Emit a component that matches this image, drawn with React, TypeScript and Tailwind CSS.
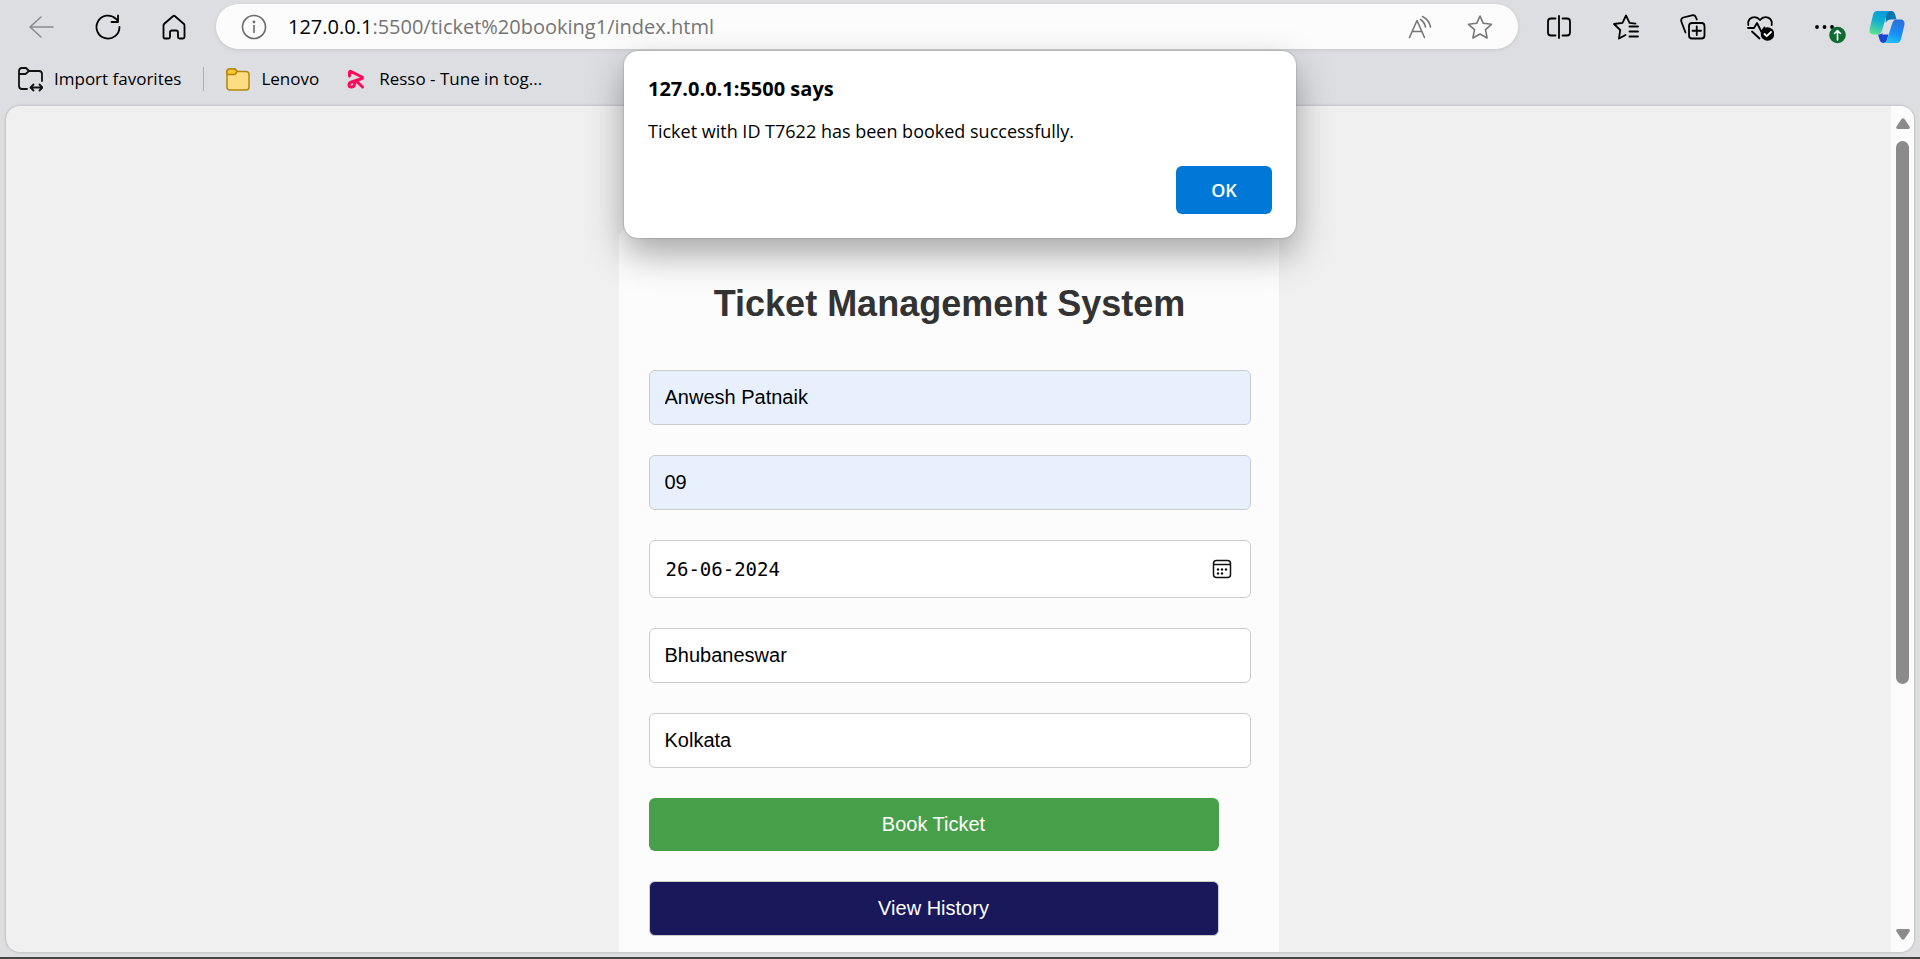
import type { ReactNode } from 'react';

type IconProps = { label: string; children: ReactNode; className?: string };

function IconButton({ label, children, className = '' }: IconProps) {
  return (
    <button type="button" aria-label={label} className={`relative flex size-7 shrink-0 items-center justify-center ${className}`}>
      {children}
    </button>
  );
}

const stroke = {
  width: 28,
  height: 28,
  viewBox: '0 0 28 28',
  fill: 'none',
  stroke: 'currentColor',
  strokeWidth: 1.6,
  strokeLinecap: 'round' as const,
  strokeLinejoin: 'round' as const,
};

function AddressBar() {
  return (
    <div className="flex h-[45px] min-w-0 flex-1 items-center rounded-full bg-[#fcfcfc] pr-6 pl-6 shadow-[0_1px_4px_rgba(0,0,0,0.1)]">
      <IconButton label="View site information" className="text-[#6b6b6b]">
        <svg {...stroke}>
          <circle cx="14" cy="14" r="11.5" />
          <path d="M14 12.5v7" />
          <circle cx="14" cy="9" r="0.6" fill="currentColor" />
        </svg>
      </IconButton>
      <p className="ml-5 min-w-0 flex-1 truncate text-[20px] leading-7 text-[#757575]">
        <span className="text-black">127.0.0.1</span>:5500/ticket%20booking1/index.html
      </p>
      <div className="flex items-center gap-8 text-[#767676]">
        <IconButton label="Read aloud">
          <svg {...stroke}>
            <path d="M3.5 24.5 11 7.5l7.5 17M6.3 18.500h9.400" />
            <path d="M14.500 6.500q4 2.500 5 7.500M16.500 3.500q6.500 3 8 10.500" />
          </svg>
        </IconButton>
        <IconButton label="Add this page to favorites">
          <svg {...stroke}>
            <path d="M14 3l3.300 7.300 8.200 1-6 5.400 1.600 8.300-7.100-4-7.100 4 1.600-8.300-6-5.400 8.200-1z" />
          </svg>
        </IconButton>
      </div>
    </div>
  );
}

function CopilotLogo() {
  return (
    <svg width="36" height="32" viewBox="0 0 36 32">
      <defs>
        <linearGradient id="cpLeft" x1="0.6" y1="0" x2="0.3" y2="1">
          <stop offset="0" stopColor="#069bdc" />
          <stop offset="0.45" stopColor="#12b0cf" />
          <stop offset="1" stopColor="#5fe08f" />
        </linearGradient>
        <linearGradient id="cpRight" x1="0.6" y1="0" x2="0.3" y2="1">
          <stop offset="0" stopColor="#2b6fdc" />
          <stop offset="0.6" stopColor="#1593f5" />
          <stop offset="1" stopColor="#25c3fd" />
        </linearGradient>
        <linearGradient id="cpTop" x1="0" y1="0" x2="1" y2="1">
          <stop offset="0" stopColor="#0a6d9e" />
          <stop offset="1" stopColor="#0f7fc0" />
        </linearGradient>
      </defs>
      <path d="M17 0h5c2.500 0 3.500 1.500 4.200 3.800L27.500 8.400h-5c-3 0-4.800 1-5.800 3.600z" fill="url(#cpTop)" />
      <path d="M9 23.600c3 0 4.500-.8 5.500-3L13 23.600h6.500L17.500 30q-.8 2-2.500 2-3.500 0-4.500-3.500z" fill="#1747d1" />
      <path d="M8 0h14c-2.600 0-3.800 2-4.600 4.800L13.500 18c-1 3.300-2.400 5.600-5.500 5.600H4.500C1 23.600 0 21 .7 17.600L4 4C4.700 1.500 6 0 8 0z" fill="url(#cpLeft)" />
      <path d="M28 32H14c2.600 0 3.800-2 4.600-4.800L23 13c1-3.200 2.200-4.600 5-4.600h3.500c3.500 0 4.500 2.600 3.800 6L32 28c-.7 2.500-2 4-4 4z" fill="url(#cpRight)" />
    </svg>
  );
}

function Toolbar() {
  return (
    <div className="flex h-[53px] items-center pr-[15px] pl-7">
      <div className="flex items-center gap-[38px] pr-7">
        <IconButton label="Back" className="text-[#8b8c8f]">
          <svg {...stroke}>
            <path d="M25 14H2M13 4 2 14l11 10" />
          </svg>
        </IconButton>
        <IconButton label="Refresh">
          <svg {...stroke} strokeWidth={1.8}>
            <path d="M25.500 14a11.500 11.500 0 1 1-3.500-8.200l2 2.200M24 2.500V9h-6.500" />
          </svg>
        </IconButton>
        <IconButton label="Home">
          <svg {...stroke} strokeWidth={1.8}>
            <path d="M3.500 12.500q0-1 .8-1.700L13 3.200q1-.8 2 0l8.700 7.600q.8.7.8 1.700v11.500q0 1.500-1.500 1.500h-3.500q-1.500 0-1.500-1.500v-4.500q0-2-2-2h-4q-2 0-2 2V24q0 1.500-1.500 1.500H5q-1.500 0-1.500-1.500z" />
          </svg>
        </IconButton>
      </div>
      <AddressBar />
      <div className="flex items-center gap-[39px] pr-7 pl-[27px]">
        <IconButton label="Split screen">
          <svg {...stroke} strokeWidth={1.8}>
            <path d="M14 3v22M10.500 5.500H6q-3 0-3 3v11q0 3 3 3h4.500M17.500 5.500H22q3 0 3 3v11q0 3-3 3h-4.500" />
          </svg>
        </IconButton>
        <IconButton label="Favorites">
          <svg {...stroke} strokeWidth={1.8}>
            <path d="M13.500 22 7 25.500l1.200-8.500L2 11l8.500-1.200L14 2.500l3.500 7.300 6 .8M17.500 13.500h8.500M17.500 18.500h8.500M17.500 23.500h8.500" />
          </svg>
        </IconButton>
        <IconButton label="Collections">
          <svg {...stroke} strokeWidth={1.8}>
            <rect x="10" y="10" width="15.5" height="15.5" rx="3" />
            <path d="M17.750 13.500v8.500M13.500 17.750h8.500M6.500 19.500 2.300 8.500q-.8-3 2-4L13 2.300q3-.6 4 2.200l.8 2" />
          </svg>
        </IconButton>
        <IconButton label="Browser essentials">
          <svg {...stroke} strokeWidth={1.8}>
            <path d="M2.300 12C1 4.500 9.500 1.500 14 7c4.500-5.500 13-2.500 11.700 5M2 15h6l3-5 4.500 9 3-4.500M6 18.500l7.500 7" />
            <circle cx="21.5" cy="21" r="6.8" fill="#000" stroke="none" />
            <path d="m18.500 21 2.200 2.200 4.300-4.200" stroke="#fff" />
          </svg>
        </IconButton>
        <IconButton label="Settings and more">
          <svg {...stroke} className="overflow-visible">
            <g fill="#000" stroke="none">
              <circle cx="4" cy="14" r="1.9" />
              <circle cx="11.5" cy="14" r="1.9" />
              <circle cx="19" cy="14" r="1.9" />
            </g>
            <circle cx="24.5" cy="22" r="8.3" fill="#0f6b2f" stroke="none" />
            <path d="M24.500 27V18M21.500 20.500l3-3 3 3" stroke="#fff" />
          </svg>
        </IconButton>
      </div>
      <button type="button" aria-label="Copilot" className="shrink-0">
        <CopilotLogo />
      </button>
    </div>
  );
}

function FavoritesBar() {
  return (
    <nav aria-label="Favorites bar" className="flex h-[53px] items-center pb-0.5 pl-[17px] text-[17px]">
      <a href="#import" className="flex items-center gap-[11px]">
        <svg width="26" height="26" viewBox="0 0 26 26" fill="none" stroke="#111" strokeWidth="1.8" strokeLinecap="round" strokeLinejoin="round">
          <path d="M10 23H5q-3 0-3-3V5q0-3 3-3h4l3 3h10q3 0 3 3v7M2 8h6.500l3.500-3M14 21.500h11M16.500 18.500l-3 3 3 3M22.500 18.500l3 3-3 3" />
        </svg>
        Import favorites
      </a>
      <span className="mx-[22px] h-6 w-px bg-[#aeb0b4]" />
      <a href="#lenovo" className="flex items-center gap-[11px]">
        <svg width="24" height="24" viewBox="0 0 24 24" fill="#ffdd81" stroke="#b2870e" strokeWidth="1.5" strokeLinejoin="round">
          <path d="M1 5q0-3 3-3h5l2.500 2.500H20q3 0 3 3V20q0 3-3 3H4q-3 0-3-3z" />
          <path d="M1 7.500V4.500q0-2.500 2.500-2.500h5.500l2 2.500-2 3z" fill="#fdc82f" />
        </svg>
        Lenovo
      </a>
      <a href="#resso" className="ml-7 flex items-center gap-[14px]">
        <svg width="18" height="20" viewBox="0 0 18 20" fill="none" stroke="#ff0a5b" strokeWidth="3" strokeLinecap="round" strokeLinejoin="round">
          <path d="M2.500 7V3.500Q2.500 2 4 2.500L15 8q1 .8 0 1.500L4.500 13q-2.500 1-2.500 3t2.500 2q2.500 0 3-2.500L8 12M10.500 13l5 5" />
        </svg>
        Resso - Tune in tog...
      </a>
    </nav>
  );
}

type FieldProps = { label: string; value: string; filled?: boolean };

function TextField({ label, value, filled = false }: FieldProps) {
  return (
    <input
      aria-label={label}
      defaultValue={value}
      className={`block h-[55px] w-full rounded-md border border-[#ccc] px-[15px] text-[20px] text-black outline-none ${filled ? 'bg-[#e8f0fe]' : 'bg-white'}`}
    />
  );
}

function DateField() {
  return (
    <div className="flex h-[58px] items-center rounded-md border border-[#ccc] bg-white pr-[18px] pl-4">
      <input
        aria-label="Date of journey"
        defaultValue="26-06-2024"
        className="h-8 min-w-0 flex-1 bg-transparent font-['DejaVu_Sans_Mono',monospace] text-[19px] text-black outline-none"
      />
      <button type="button" aria-label="Show date picker">
        <svg width="20" height="20" viewBox="0 0 20 20" fill="none" stroke="#111" strokeWidth="1.5">
          <rect x="1.5" y="1.5" width="17" height="17" rx="3" />
          <path d="M1.500 5.500h17" />
          <g fill="#111" stroke="none">
            <circle cx="6" cy="10.5" r="1.2" />
            <circle cx="10" cy="10.5" r="1.2" />
            <circle cx="14" cy="10.5" r="1.2" />
            <circle cx="6" cy="14.5" r="1.2" />
            <circle cx="10" cy="14.5" r="1.2" />
          </g>
        </svg>
      </button>
    </div>
  );
}

function BookingForm() {
  return (
    <section className="mx-auto mt-[122px] w-full max-w-[660px] rounded-[10px] bg-[#fcfcfc] pt-[54px] pr-7 pb-[30px] pl-[30px] font-['Liberation_Sans',Arial,sans-serif]">
      <h1 className="text-center text-4xl leading-[44px] font-bold text-[#333]">Ticket Management System</h1>
      <form className="mt-11 flex flex-col gap-[30px]" onSubmit={(event) => event.preventDefault()}>
        <TextField label="Name" value="Anwesh Patnaik" filled />
        <TextField label="Age" value="09" filled />
        <DateField />
        <TextField label="From" value="Bhubaneswar" />
        <TextField label="To" value="Kolkata" />
        <div className="mr-8 flex flex-col gap-[30px] text-[20px] text-white">
          <button type="submit" className="h-[53px] rounded-md bg-[#47a049] pb-0.5">Book Ticket</button>
          <button type="button" className="h-[55px] rounded-md border border-[#ccc] bg-[#18185b] pb-0.5">View History</button>
        </div>
      </form>
    </section>
  );
}

function Scrollbar() {
  return (
    <div aria-hidden="true" className="flex w-[23px] shrink-0 flex-col items-center bg-[#fcfcfc] py-3">
      <svg width="14" height="12" viewBox="0 0 14 12" fill="#8b8b8b">
        <path d="M5.500 1Q7-.6 8.500 1l5 7.500Q14.500 11 12 11H2Q-.5 11 .5 8.500z" />
      </svg>
      <div className="flex w-full flex-1 flex-col items-center py-[11px]">
        <div className="h-[70%] w-[13px] rounded-full bg-[#8b8b8b]" />
      </div>
      <svg width="14" height="12" viewBox="0 0 14 12" fill="#8b8b8b">
        <path d="M5.500 11Q7 12.600 8.500 11l5-7.500Q14.500 1 12 1H2Q-.5 1 .5 3.500z" />
      </svg>
    </div>
  );
}

function BookedAlert() {
  return (
    <div
      role="alertdialog"
      aria-labelledby="alert-title"
      aria-describedby="alert-message"
      className="absolute top-[51px] left-1/2 flex w-[672px] max-w-full -translate-x-1/2 flex-col rounded-[14px] bg-white p-6 text-black shadow-[0_0_2px_rgba(0,0,0,0.35),0_16px_36px_rgba(0,0,0,0.34)]"
    >
      <h2 id="alert-title" className="text-[20px] leading-7 font-bold">127.0.0.1:5500 says</h2>
      <p id="alert-message" className="mt-[14px] text-[18px] leading-7">Ticket with ID T7622 has been booked successfully.</p>
      <button type="button" className="mt-[21px] h-12 w-24 self-end rounded-md bg-[#0078d7] text-[18px] font-semibold text-white">
        OK
      </button>
    </div>
  );
}

export default function App() {
  return (
    <div className="relative flex h-screen flex-col overflow-hidden border-b-2 border-[#45463f] bg-[#dddee2] font-['Open_Sans','Segoe_UI',sans-serif] text-black">
      <header>
        <Toolbar />
        <FavoritesBar />
      </header>
      <main className="mx-[6px] mb-[5px] flex min-h-0 flex-1 overflow-hidden rounded-[14px] bg-[#f0f0f0] shadow-[0_0_3px_rgba(0,0,0,0.25)]">
        <div className="min-w-0 flex-1 overflow-hidden">
          <BookingForm />
        </div>
        <Scrollbar />
      </main>
      <BookedAlert />
    </div>
  );
}
